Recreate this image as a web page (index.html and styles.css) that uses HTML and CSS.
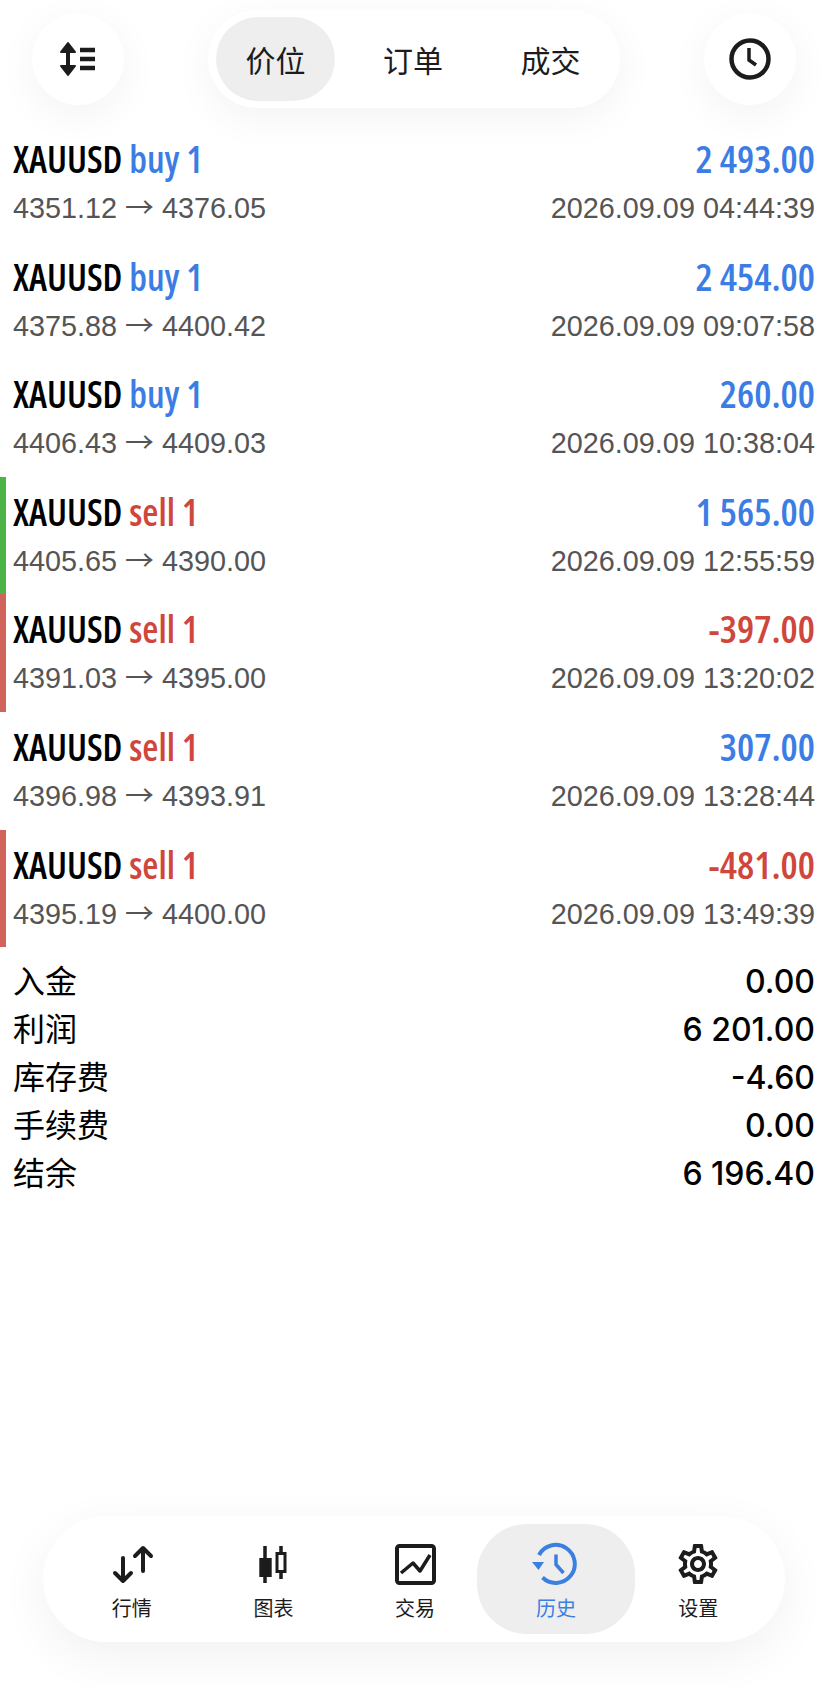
FILE: index.html
```html
<!DOCTYPE html>
<html lang="zh-CN">
<head>
  <meta charset="UTF-8">
  <meta name="viewport" content="width=device-width, initial-scale=1.0">
  <title>历史</title>
  <link rel="stylesheet" href="styles.css">
</head>
<body>
  <div class="page">
    <header class="top-bar">
      <button class="round-btn">
        <svg width="38" height="36" viewBox="0 0 38 36" fill="none" stroke="#1c1c1c" stroke-width="4">
          <path d="M9 4V32" />
          <path d="M2 11L9 2L16 11Z" fill="#1c1c1c" stroke-width="2" stroke-linejoin="round" />
          <path d="M2 25L9 34L16 25Z" fill="#1c1c1c" stroke-width="2" stroke-linejoin="round" />
          <path d="M21 9H36M21 18H36M21 27H36" stroke-width="4.5" />
        </svg>
      </button>
      <nav class="tabs">
        <div class="tab active">价位</div>
        <div class="tab">订单</div>
        <div class="tab">成交</div>
      </nav>
      <button class="round-btn">
        <svg width="42" height="42" viewBox="0 0 42 42" fill="none" stroke="#1c1c1c" stroke-width="4.5">
          <circle cx="21" cy="21" r="18.5" />
          <path d="M20 10V22L27 27" stroke-width="3.5" />
        </svg>
      </button>
    </header>

    <section class="deals">
      <div class="deal">
        <div class="line"><span class="symbol">XAUUSD <span class="buy">buy 1</span></span><span class="profit">2 493.00</span></div>
        <div class="line sub"><span>4351.12 <span class="arrow">→</span> 4376.05</span><span>2026.09.09 04:44:39</span></div>
      </div>
      <div class="deal">
        <div class="line"><span class="symbol">XAUUSD <span class="buy">buy 1</span></span><span class="profit">2 454.00</span></div>
        <div class="line sub"><span>4375.88 <span class="arrow">→</span> 4400.42</span><span>2026.09.09 09:07:58</span></div>
      </div>
      <div class="deal">
        <div class="line"><span class="symbol">XAUUSD <span class="buy">buy 1</span></span><span class="profit">260.00</span></div>
        <div class="line sub"><span>4406.43 <span class="arrow">→</span> 4409.03</span><span>2026.09.09 10:38:04</span></div>
      </div>
      <div class="deal take-profit">
        <div class="line"><span class="symbol">XAUUSD <span class="sell">sell 1</span></span><span class="profit">1 565.00</span></div>
        <div class="line sub"><span>4405.65 <span class="arrow">→</span> 4390.00</span><span>2026.09.09 12:55:59</span></div>
      </div>
      <div class="deal stop-loss">
        <div class="line"><span class="symbol">XAUUSD <span class="sell">sell 1</span></span><span class="profit loss">-397.00</span></div>
        <div class="line sub"><span>4391.03 <span class="arrow">→</span> 4395.00</span><span>2026.09.09 13:20:02</span></div>
      </div>
      <div class="deal">
        <div class="line"><span class="symbol">XAUUSD <span class="sell">sell 1</span></span><span class="profit">307.00</span></div>
        <div class="line sub"><span>4396.98 <span class="arrow">→</span> 4393.91</span><span>2026.09.09 13:28:44</span></div>
      </div>
      <div class="deal stop-loss">
        <div class="line"><span class="symbol">XAUUSD <span class="sell">sell 1</span></span><span class="profit loss">-481.00</span></div>
        <div class="line sub"><span>4395.19 <span class="arrow">→</span> 4400.00</span><span>2026.09.09 13:49:39</span></div>
      </div>
    </section>

    <section class="summary">
      <div class="summary-row"><span>入金</span><span class="value">0.00</span></div>
      <div class="summary-row"><span>利润</span><span class="value">6 201.00</span></div>
      <div class="summary-row"><span>库存费</span><span class="value">-4.60</span></div>
      <div class="summary-row"><span>手续费</span><span class="value">0.00</span></div>
      <div class="summary-row"><span>结余</span><span class="value">6 196.40</span></div>
    </section>

    <nav class="bottom-nav">
      <div class="nav-item">
        <svg width="44" height="44" viewBox="0 0 44 44" fill="none" stroke="#1c1c1c" stroke-width="4" stroke-linecap="round" stroke-linejoin="round">
          <path d="M13 16V39M5 31L13 39L21 31" />
          <path d="M33 6V29M25 14L33 6L41 14" />
        </svg>
        <span>行情</span>
      </div>
      <div class="nav-item">
        <svg width="44" height="44" viewBox="0 0 44 44" fill="none" stroke="#1c1c1c">
          <path d="M14 4V41M30 4V37" stroke-width="3.5" />
          <rect x="8.3" y="16" width="12.4" height="19" fill="#1c1c1c" stroke="none" />
          <rect x="26" y="11.5" width="8" height="18" fill="#fff" stroke-width="3" />
        </svg>
        <span>图表</span>
      </div>
      <div class="nav-item">
        <svg width="44" height="44" viewBox="0 0 44 44" fill="none" stroke="#1c1c1c" stroke-linejoin="round">
          <rect x="4" y="4" width="37" height="37" rx="2.5" stroke-width="4" />
          <path d="M8 31L20 21L27 29L37 13" stroke-width="3.5" />
        </svg>
        <span>交易</span>
      </div>
      <div class="nav-item active">
        <svg width="48" height="44" viewBox="0 0 48 44" fill="none" stroke="#3b7fe0" stroke-width="4">
          <path d="M7 13A19 19 0 1 1 10.5 35.5" />
          <path d="M0 20H12L6.5 28Z" fill="#3b7fe0" stroke="none" />
          <path d="M24 12.5V22.5L31.5 31" stroke-width="3.5" />
        </svg>
        <span>历史</span>
      </div>
      <div class="nav-item">
        <svg width="48" height="48" viewBox="0 0 24 24" fill="#1c1c1c" class="gear">
          <path d="M19.43 12.98c.04-.32.07-.64.07-.98 0-.34-.03-.66-.07-.98l2.11-1.65c.19-.15.24-.42.12-.64l-2-3.46c-.09-.16-.26-.25-.44-.25-.06 0-.12.01-.17.03l-2.49 1c-.52-.4-1.08-.73-1.69-.98l-.38-2.65C14.46 2.18 14.25 2 14 2h-4c-.25 0-.46.18-.49.42l-.38 2.65c-.61.25-1.17.59-1.69.98l-2.49-1c-.06-.02-.12-.03-.18-.03-.17 0-.34.09-.43.25l-2 3.46c-.13.22-.07.49.12.64l2.11 1.65c-.04.32-.07.65-.07.98 0 .33.03.66.07.98l-2.11 1.65c-.19.15-.24.42-.12.64l2 3.46c.09.16.26.25.44.25.06 0 .12-.01.17-.03l2.49-1c.52.4 1.08.73 1.69.98l.38 2.65c.03.24.24.42.49.42h4c.25 0 .46-.18.49-.42l.38-2.65c.61-.25 1.17-.59 1.69-.98l2.49 1c.06.02.12.03.18.03.17 0 .34-.09.43-.25l2-3.46c.12-.22.07-.49-.12-.64l-2.11-1.65zm-1.98-1.71c.04.31.05.52.05.73 0 .21-.02.43-.05.73l-.14 1.13.89.7 1.08.84-.7 1.21-1.27-.51-1.04-.42-.9.68c-.43.32-.84.56-1.25.73l-1.06.43-.16 1.13-.2 1.35h-1.4l-.19-1.35-.16-1.13-1.06-.43c-.43-.18-.83-.41-1.23-.71l-.91-.7-1.06.43-1.27.51-.7-1.21 1.08-.84.89-.7-.14-1.13c-.03-.31-.05-.54-.05-.74s.02-.43.05-.73l.14-1.13-.89-.7-1.08-.84.7-1.21 1.27.51 1.04.42.9-.68c.43-.32.84-.56 1.25-.73l1.06-.43.16-1.13.2-1.35h1.39l.19 1.35.16 1.13 1.06.43c.43.18.83.41 1.23.71l.91.7 1.06-.43 1.27-.51.7 1.21-1.07.85-.89.7.14 1.13zM12 8c-2.21 0-4 1.79-4 4s1.79 4 4 4 4-1.79 4-4-1.79-4-4-4zm0 6c-1.1 0-2-.9-2-2s.9-2 2-2 2 .9 2 2-.9 2-2 2z" />
        </svg>
        <span>设置</span>
      </div>
    </nav>
  </div>
</body>
</html>
```

FILE: styles.css
```css
* {
  box-sizing: border-box;
}

body {
  margin: 0;
  background-color: #fff;
  color: #000;
  font-family: "Liberation Sans", "Noto Sans CJK SC", sans-serif;
}

.page {
  display: flex;
  flex-direction: column;
  height: 1686px;
  overflow: hidden;
}

/* top bar */
.top-bar {
  display: flex;
  align-items: center;
  justify-content: space-between;
  height: 124px;
  padding: 0 32px 6px;
}

.round-btn {
  display: flex;
  align-items: center;
  justify-content: center;
  width: 92px;
  height: 92px;
  padding: 0;
  border: none;
  border-radius: 50%;
  background-color: #fff;
  box-shadow: 0 10px 40px rgba(0, 0, 0, 0.05);
}

.tabs {
  display: flex;
  gap: 18.4px;
  height: 98px;
  padding: 7px 10px 7px 8px;
  border-radius: 49px;
  background-color: #fff;
  box-shadow: 0 10px 40px rgba(0, 0, 0, 0.05);
}

.tab {
  display: flex;
  align-items: center;
  justify-content: center;
  width: 119px;
  border-radius: 42px;
  font-family: "Noto Sans CJK SC", sans-serif;
  font-size: 30px;
  color: #1c1c1c;
}

.tab.active {
  background-color: #eeeeee;
}

/* deal list */
.deal {
  display: flex;
  flex-direction: column;
  gap: 8px;
  height: 117.6px;
  padding: 12px 13px 0 7px;
  border-left: 6px solid transparent;
}

.take-profit {
  border-left-color: #4cb447;
}

.stop-loss {
  border-left-color: #d0635a;
}

.line {
  display: flex;
  justify-content: space-between;
  align-items: baseline;
  height: 44px;
  font-family: "Open Sans", sans-serif;
  font-stretch: 75%;
  font-size: 37px;
  line-height: 44px;
  font-weight: 600;
}

.profit {
  font-size: 38.5px;
}

.buy,
.profit {
  color: #3b7de4;
}

.sell,
.profit.loss {
  color: #cf463c;
}

.line.sub {
  height: 40px;
  font-family: "Liberation Sans", sans-serif;
  font-stretch: normal;
  font-size: 28.8px;
  line-height: 40px;
  font-weight: 400;
  color: #555555;
}

.arrow {
  font-family: "Noto Sans CJK SC", sans-serif;
  line-height: 1;
}

/* totals */
.summary {
  padding: 8px 13px 0;
}

.summary-row {
  display: flex;
  justify-content: space-between;
  align-items: baseline;
  height: 48px;
  font-family: "Noto Sans CJK SC", sans-serif;
  font-size: 32px;
  line-height: 48px;
}

.value {
  font-family: "Inter", sans-serif;
  font-size: 32px;
  font-weight: 500;
}

/* bottom navigation */
.bottom-nav {
  display: grid;
  grid-template-columns: repeat(5, 141.6px);
  margin: auto 43px 44px;
  height: 126px;
  padding: 8px 18px;
  border-radius: 63px;
  background-color: #fff;
  box-shadow: 0 14px 50px rgba(0, 0, 0, 0.06);
}

.nav-item {
  display: flex;
  flex-direction: column;
  align-items: center;
  justify-content: center;
  gap: 7px;
  padding-top: 5px;
  border-radius: 50px;
  font-family: "Noto Sans CJK SC", sans-serif;
  font-size: 20px;
  color: #1c1c1c;
}

.nav-item.active {
  margin: 0 -8px 0 -9px;
  background-color: #eeeeee;
  color: #3b7fe0;
}

.gear {
  margin: -2px 0;
}
```
